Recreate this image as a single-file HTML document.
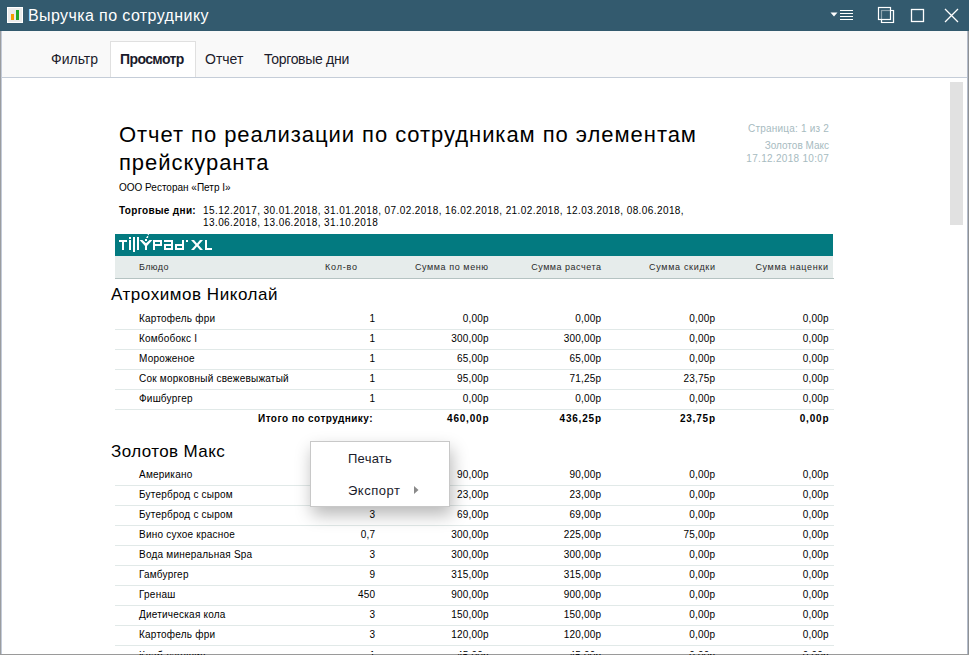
<!DOCTYPE html>
<html><head><meta charset="utf-8">
<style>
*{margin:0;padding:0;box-sizing:border-box}
html,body{width:969px;height:655px;overflow:hidden;background:#fff;font-family:"Liberation Sans",sans-serif}
.a{position:absolute;white-space:nowrap;line-height:1}
#tb{position:absolute;left:0;top:0;width:969px;height:31px;background:#335a6e}
#tool{position:absolute;left:0;top:31px;width:969px;height:46px;background:#f9f9f9}
#tline{position:absolute;left:0;top:77px;width:969px;height:1px;background:#c5cdd8}
#lb{position:absolute;left:0;top:31px;width:2px;height:624px;background:#9b9d9f;border-right:1px solid #c3cbd9}
#rb{position:absolute;left:967px;top:31px;width:2px;height:624px;background:#8f9295;border-left:1px solid #b4bccb}
#bb{position:absolute;left:0;top:654px;width:969px;height:1px;background:#9a9a9a}
#thumb{position:absolute;left:950px;top:82px;width:13px;height:143px;background:#e1e1e1}
.tab{font-size:14px;color:#1b1b2b}
#acttab{position:absolute;left:110px;top:41px;width:86px;height:37px;background:#fff;border:1px solid #e0e0e0;border-bottom:none}
.r{font-size:10px;color:#000}
.num{text-align:right}
.hd{font-size:9px;color:#2a2a2a}
.hl{position:absolute;left:115px;width:719px;height:1px;background:#e1e9e8}
#menu{position:absolute;left:310px;top:441px;width:140px;height:66px;background:#fff;border:1px solid #c8c8c8;box-shadow:2px 8px 16px rgba(0,0,0,0.28)}
</style></head><body>
<div id="tb"></div>
<svg class="a" style="left:0;top:0" width="969" height="31">
  <rect x="7" y="7" width="16" height="16" fill="#fff"/>
  <rect x="8" y="8" width="14" height="14" fill="#ebebeb"/>
  <rect x="11" y="14" width="3" height="6" fill="#f59d00"/>
  <rect x="16" y="10" width="3" height="10" fill="#21a82a"/>
  <polygon points="830.5,12.5 837.5,12.5 834,16.5" fill="#fff"/>
  <rect x="840" y="10" width="13" height="1" fill="#fff"/>
  <rect x="840" y="13" width="13" height="1" fill="#fff"/>
  <rect x="840" y="16" width="13" height="1" fill="#fff"/>
  <rect x="840" y="19" width="13" height="1" fill="#fff"/>
  <rect x="881.5" y="10.5" width="12" height="12" fill="none" stroke="#fff" stroke-opacity="0.45" stroke-width="1.2"/>
  <path d="M890.5 10.5 H893.5 V22.5 H881.5 V19.5" fill="none" stroke="#fff" stroke-width="1.2"/>
  <rect x="878.5" y="7.5" width="12" height="12" fill="none" stroke="#fff" stroke-width="1.2"/>
  <rect x="911.5" y="9.5" width="12" height="12" fill="none" stroke="#fff" stroke-width="1.3"/>
  <path d="M945 9 L958 22 M958 9 L945 22" stroke="#fff" stroke-width="1.3"/>
</svg>
<div class="a" style="left:28px;top:8px;font-size:16px;color:#fff;letter-spacing:0.4px">Выручка по сотруднику</div>

<div id="tool"></div>
<div id="acttab"></div>
<div id="tline"></div>
<div class="a tab" style="left:51px;top:52px">Фильтр</div>
<div class="a tab" style="left:120px;top:52px;font-weight:bold;letter-spacing:-0.6px">Просмотр</div>
<div class="a tab" style="left:205px;top:52px">Отчет</div>
<div class="a tab" style="left:264px;top:52px;letter-spacing:-0.3px">Торговые дни</div>

<div id="lb"></div><div id="rb"></div><div id="bb"></div>
<div id="thumb"></div>

<!-- report -->
<div class="a" style="left:119px;top:124px;font-size:22px;letter-spacing:0.95px;color:#000">Отчет по реализации по сотрудникам по элементам</div>
<div class="a" style="left:119px;top:152px;font-size:22px;letter-spacing:0.95px;color:#000">прейскуранта</div>
<div class="a r" style="left:119px;top:183px">ООО Ресторан «Петр I»</div>
<div class="a r" style="left:119px;top:206px;font-weight:bold;letter-spacing:0.33px">Торговые дни:</div>
<div class="a r" style="left:203px;top:206px;letter-spacing:0.41px">15.12.2017, 30.01.2018, 31.01.2018, 07.02.2018, 16.02.2018, 21.02.2018, 12.03.2018, 08.06.2018,</div>
<div class="a r" style="left:203px;top:218px;letter-spacing:0.41px">13.06.2018, 13.06.2018, 31.10.2018</div>

<div class="a r num" style="right:140px;top:124px;color:#a7bbbf;letter-spacing:0.2px">Страница: 1 из 2</div>
<div class="a r num" style="right:140px;top:141px;color:#a7bbbf">Золотов Макс</div>
<div class="a r num" style="right:140px;top:154px;color:#a7bbbf;letter-spacing:0.3px">17.12.2018 10:07</div>

<div class="a" style="left:115px;top:234px;width:718px;height:22px;background:#037a80"></div>
<svg class="a" style="left:0;top:0" width="969" height="260">
 <g fill="#fff">
  <rect x="119" y="240" width="8" height="2"/><rect x="122" y="240" width="2" height="10"/>
  <rect x="129" y="237" width="2" height="2"/><rect x="129" y="240" width="2" height="10"/>
  <rect x="133" y="237" width="2" height="15"/>
  <rect x="137" y="237" width="2" height="13"/>
  <polygon points="139.6,240 142.4,240 146,243.3 149.6,240 152.4,240 147,246 147,250 145,250 145,246"/>
  <rect x="145" y="239" width="2" height="2"/>
  <polygon points="146,238 147.3,236 148.3,236 148,238"/>
  <polygon points="147.4,233.8 149.2,233.8 148.3,235.4"/>
  <path d="M153 240 H162 V246 H155 V250 H153 Z M155 242 V244 H160 V242 Z" fill-rule="evenodd"/>
  <path d="M164 240 H173 V250 H164 V244 H171 V242 H164 Z M166 246 V248 H171 V246 Z" fill-rule="evenodd"/>
  <path d="M182 240 H184 V250 H175 V244 H182 Z M177 246 V248 H182 V246 Z" fill-rule="evenodd"/>
  <rect x="186" y="240" width="2" height="2"/>
  <polygon points="191,240 194,240 197,243.5 200,240 203,240 198.5,245 203,250 200,250 197,246.5 194,250 191,250 195.5,245"/>
  <rect x="205" y="240" width="2" height="10"/><rect x="205" y="248" width="7" height="2"/>
 </g>
</svg>
<div class="a" style="left:115px;top:256px;width:718px;height:22px;background:#e6eceb"></div>
<div class="a" style="left:115px;top:278px;width:719px;height:1px;background:#b5c3c2"></div>
<div class="a r hd" style="left:139px;top:263px;letter-spacing:0.38px">Блюдо</div>
<div class="a r hd" style="left:325px;top:263px;letter-spacing:0.8px">Кол-во</div>
<div class="a r num hd" style="right:480.4px;top:263px;letter-spacing:0.58px">Сумма по меню</div>
<div class="a r num hd" style="right:367.5px;top:263px;letter-spacing:0.51px">Сумма расчета</div>
<div class="a r num hd" style="right:253.3px;top:263px;letter-spacing:0.68px">Сумма скидки</div>
<div class="a r num hd" style="right:140.4px;top:263px;letter-spacing:0.65px">Сумма наценки</div>

<!--ROWS-->
<div class="a r" style="left:139px;top:314px;letter-spacing:0.22px;">Картофель фри</div>
<div class="a r num" style="right:593.8px;top:314px;letter-spacing:0.2px;">1</div>
<div class="a r num" style="right:480.3px;top:314px;letter-spacing:0.2px;">0,00р</div>
<div class="a r num" style="right:367.8px;top:314px;letter-spacing:0.2px;">0,00р</div>
<div class="a r num" style="right:253.8px;top:314px;letter-spacing:0.2px;">0,00р</div>
<div class="a r num" style="right:140.3px;top:314px;letter-spacing:0.2px;">0,00р</div>
<div class="hl" style="top:329px"></div>
<div class="a r" style="left:139px;top:334px;letter-spacing:0.22px;">Комбобокс I</div>
<div class="a r num" style="right:593.8px;top:334px;letter-spacing:0.2px;">1</div>
<div class="a r num" style="right:480.3px;top:334px;letter-spacing:0.2px;">300,00р</div>
<div class="a r num" style="right:367.8px;top:334px;letter-spacing:0.2px;">300,00р</div>
<div class="a r num" style="right:253.8px;top:334px;letter-spacing:0.2px;">0,00р</div>
<div class="a r num" style="right:140.3px;top:334px;letter-spacing:0.2px;">0,00р</div>
<div class="hl" style="top:349px"></div>
<div class="a r" style="left:139px;top:354px;letter-spacing:0.22px;">Мороженое</div>
<div class="a r num" style="right:593.8px;top:354px;letter-spacing:0.2px;">1</div>
<div class="a r num" style="right:480.3px;top:354px;letter-spacing:0.2px;">65,00р</div>
<div class="a r num" style="right:367.8px;top:354px;letter-spacing:0.2px;">65,00р</div>
<div class="a r num" style="right:253.8px;top:354px;letter-spacing:0.2px;">0,00р</div>
<div class="a r num" style="right:140.3px;top:354px;letter-spacing:0.2px;">0,00р</div>
<div class="hl" style="top:369px"></div>
<div class="a r" style="left:139px;top:374px;letter-spacing:0.22px;">Сок морковный свежевыжатый</div>
<div class="a r num" style="right:593.8px;top:374px;letter-spacing:0.2px;">1</div>
<div class="a r num" style="right:480.3px;top:374px;letter-spacing:0.2px;">95,00р</div>
<div class="a r num" style="right:367.8px;top:374px;letter-spacing:0.2px;">71,25р</div>
<div class="a r num" style="right:253.8px;top:374px;letter-spacing:0.2px;">23,75р</div>
<div class="a r num" style="right:140.3px;top:374px;letter-spacing:0.2px;">0,00р</div>
<div class="hl" style="top:389px"></div>
<div class="a r" style="left:139px;top:394px;letter-spacing:0.22px;">Фишбургер</div>
<div class="a r num" style="right:593.8px;top:394px;letter-spacing:0.2px;">1</div>
<div class="a r num" style="right:480.3px;top:394px;letter-spacing:0.2px;">0,00р</div>
<div class="a r num" style="right:367.8px;top:394px;letter-spacing:0.2px;">0,00р</div>
<div class="a r num" style="right:253.8px;top:394px;letter-spacing:0.2px;">0,00р</div>
<div class="a r num" style="right:140.3px;top:394px;letter-spacing:0.2px;">0,00р</div>
<div class="hl" style="top:409px"></div>
<div class="a r" style="left:258px;top:414px;font-weight:bold;letter-spacing:0.46px">Итого по сотруднику:</div>
<div class="a r num" style="right:479.7px;top:414px;font-weight:bold;letter-spacing:0.8px">460,00р</div>
<div class="a r num" style="right:367.2px;top:414px;font-weight:bold;letter-spacing:0.8px">436,25р</div>
<div class="a r num" style="right:253.2px;top:414px;font-weight:bold;letter-spacing:0.8px">23,75р</div>
<div class="a r num" style="right:139.7px;top:414px;font-weight:bold;letter-spacing:0.8px">0,00р</div>
<div class="a r" style="left:139px;top:470px;letter-spacing:0.22px;">Американо</div>
<div class="a r num" style="right:593.8px;top:470px;letter-spacing:0.2px;">1</div>
<div class="a r num" style="right:480.3px;top:470px;letter-spacing:0.2px;">90,00р</div>
<div class="a r num" style="right:367.8px;top:470px;letter-spacing:0.2px;">90,00р</div>
<div class="a r num" style="right:253.8px;top:470px;letter-spacing:0.2px;">0,00р</div>
<div class="a r num" style="right:140.3px;top:470px;letter-spacing:0.2px;">0,00р</div>
<div class="hl" style="top:485px"></div>
<div class="a r" style="left:139px;top:490px;letter-spacing:0.22px;">Бутерброд с сыром</div>
<div class="a r num" style="right:593.8px;top:490px;letter-spacing:0.2px;">1</div>
<div class="a r num" style="right:480.3px;top:490px;letter-spacing:0.2px;">23,00р</div>
<div class="a r num" style="right:367.8px;top:490px;letter-spacing:0.2px;">23,00р</div>
<div class="a r num" style="right:253.8px;top:490px;letter-spacing:0.2px;">0,00р</div>
<div class="a r num" style="right:140.3px;top:490px;letter-spacing:0.2px;">0,00р</div>
<div class="hl" style="top:505px"></div>
<div class="a r" style="left:139px;top:510px;letter-spacing:0.22px;">Бутерброд с сыром</div>
<div class="a r num" style="right:593.8px;top:510px;letter-spacing:0.2px;">3</div>
<div class="a r num" style="right:480.3px;top:510px;letter-spacing:0.2px;">69,00р</div>
<div class="a r num" style="right:367.8px;top:510px;letter-spacing:0.2px;">69,00р</div>
<div class="a r num" style="right:253.8px;top:510px;letter-spacing:0.2px;">0,00р</div>
<div class="a r num" style="right:140.3px;top:510px;letter-spacing:0.2px;">0,00р</div>
<div class="hl" style="top:525px"></div>
<div class="a r" style="left:139px;top:530px;letter-spacing:0.22px;">Вино сухое красное</div>
<div class="a r num" style="right:593.8px;top:530px;letter-spacing:0.2px;">0,7</div>
<div class="a r num" style="right:480.3px;top:530px;letter-spacing:0.2px;">300,00р</div>
<div class="a r num" style="right:367.8px;top:530px;letter-spacing:0.2px;">225,00р</div>
<div class="a r num" style="right:253.8px;top:530px;letter-spacing:0.2px;">75,00р</div>
<div class="a r num" style="right:140.3px;top:530px;letter-spacing:0.2px;">0,00р</div>
<div class="hl" style="top:545px"></div>
<div class="a r" style="left:139px;top:550px;letter-spacing:0.22px;">Вода минеральная Spa</div>
<div class="a r num" style="right:593.8px;top:550px;letter-spacing:0.2px;">3</div>
<div class="a r num" style="right:480.3px;top:550px;letter-spacing:0.2px;">300,00р</div>
<div class="a r num" style="right:367.8px;top:550px;letter-spacing:0.2px;">300,00р</div>
<div class="a r num" style="right:253.8px;top:550px;letter-spacing:0.2px;">0,00р</div>
<div class="a r num" style="right:140.3px;top:550px;letter-spacing:0.2px;">0,00р</div>
<div class="hl" style="top:565px"></div>
<div class="a r" style="left:139px;top:570px;letter-spacing:0.22px;">Гамбургер</div>
<div class="a r num" style="right:593.8px;top:570px;letter-spacing:0.2px;">9</div>
<div class="a r num" style="right:480.3px;top:570px;letter-spacing:0.2px;">315,00р</div>
<div class="a r num" style="right:367.8px;top:570px;letter-spacing:0.2px;">315,00р</div>
<div class="a r num" style="right:253.8px;top:570px;letter-spacing:0.2px;">0,00р</div>
<div class="a r num" style="right:140.3px;top:570px;letter-spacing:0.2px;">0,00р</div>
<div class="hl" style="top:585px"></div>
<div class="a r" style="left:139px;top:590px;letter-spacing:0.22px;">Гренаш</div>
<div class="a r num" style="right:593.8px;top:590px;letter-spacing:0.2px;">450</div>
<div class="a r num" style="right:480.3px;top:590px;letter-spacing:0.2px;">900,00р</div>
<div class="a r num" style="right:367.8px;top:590px;letter-spacing:0.2px;">900,00р</div>
<div class="a r num" style="right:253.8px;top:590px;letter-spacing:0.2px;">0,00р</div>
<div class="a r num" style="right:140.3px;top:590px;letter-spacing:0.2px;">0,00р</div>
<div class="hl" style="top:605px"></div>
<div class="a r" style="left:139px;top:610px;letter-spacing:0.22px;">Диетическая кола</div>
<div class="a r num" style="right:593.8px;top:610px;letter-spacing:0.2px;">3</div>
<div class="a r num" style="right:480.3px;top:610px;letter-spacing:0.2px;">150,00р</div>
<div class="a r num" style="right:367.8px;top:610px;letter-spacing:0.2px;">150,00р</div>
<div class="a r num" style="right:253.8px;top:610px;letter-spacing:0.2px;">0,00р</div>
<div class="a r num" style="right:140.3px;top:610px;letter-spacing:0.2px;">0,00р</div>
<div class="hl" style="top:625px"></div>
<div class="a r" style="left:139px;top:630px;letter-spacing:0.22px;">Картофель фри</div>
<div class="a r num" style="right:593.8px;top:630px;letter-spacing:0.2px;">3</div>
<div class="a r num" style="right:480.3px;top:630px;letter-spacing:0.2px;">120,00р</div>
<div class="a r num" style="right:367.8px;top:630px;letter-spacing:0.2px;">120,00р</div>
<div class="a r num" style="right:253.8px;top:630px;letter-spacing:0.2px;">0,00р</div>
<div class="a r num" style="right:140.3px;top:630px;letter-spacing:0.2px;">0,00р</div>
<div class="hl" style="top:645px"></div>
<div class="a r" style="left:139px;top:651px;letter-spacing:0.22px;">Клаб-сэндвич</div>
<div class="a r num" style="right:593.8px;top:651px;letter-spacing:0.2px;">1</div>
<div class="a r num" style="right:480.3px;top:651px;letter-spacing:0.2px;">45,00р</div>
<div class="a r num" style="right:367.8px;top:651px;letter-spacing:0.2px;">45,00р</div>
<div class="a r num" style="right:253.8px;top:651px;letter-spacing:0.2px;">0,00р</div>
<div class="a r num" style="right:140.3px;top:651px;letter-spacing:0.2px;">0,00р</div>
<!--/ROWS-->

<div class="a" style="left:111px;top:286px;font-size:17px;letter-spacing:0.55px;color:#000">Атрохимов Николай</div>
<div class="a" style="left:111px;top:443px;font-size:17px;letter-spacing:0.4px;color:#000">Золотов Макс</div>

<div class="a" style="left:2px;top:652px;width:965px;height:2px;background:#fff"></div>
<div id="menu"></div>
<div class="a" style="left:348px;top:452px;font-size:13px;letter-spacing:0.25px;color:#1b1b2b">Печать</div>
<div class="a" style="left:348px;top:484px;font-size:13px;letter-spacing:0.5px;color:#1b1b2b">Экспорт</div>
<svg class="a" style="left:0;top:0" width="969" height="655"><polygon points="414,486 418.5,490 414,494" fill="#8a8a8a"/></svg>
</body></html>
